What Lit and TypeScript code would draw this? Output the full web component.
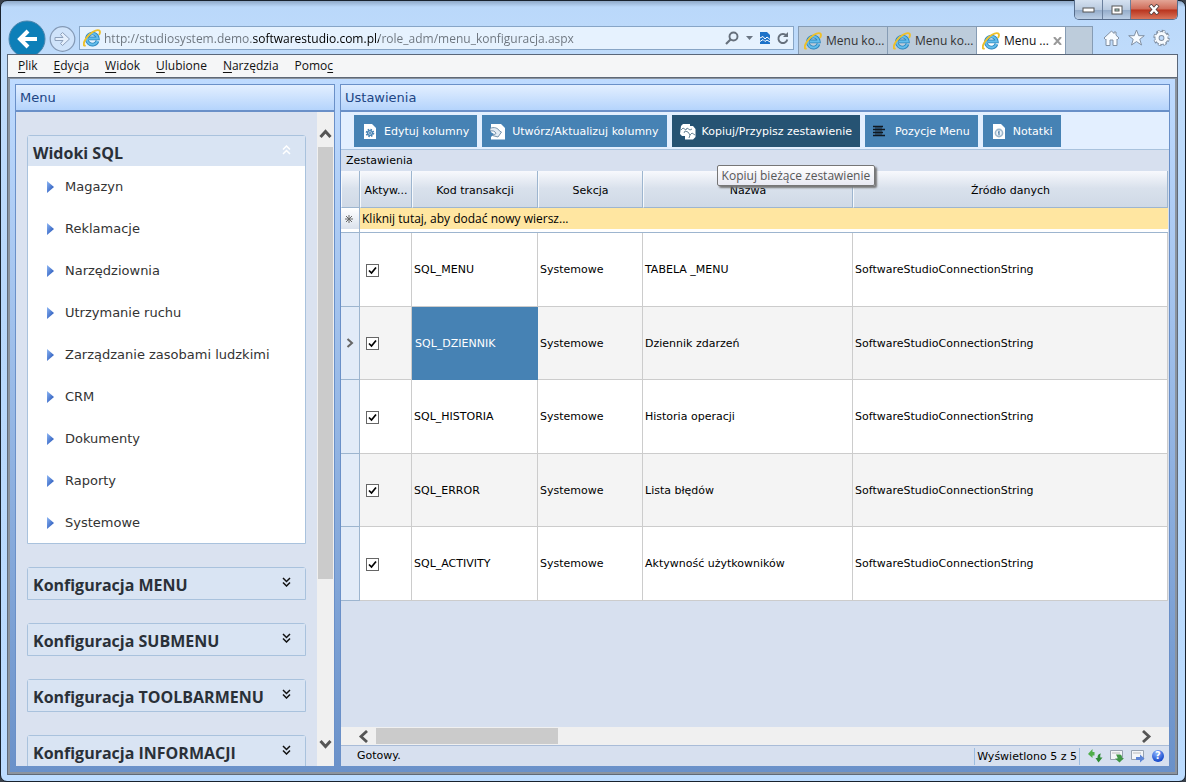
import { LitElement, html, css, svg } from "lit";
import { customElement } from "lit/decorators.js";
import { classMap } from "lit/directives/class-map.js";

const ieIcon = (id: string) => html`<svg class="ie" viewBox="0 0 18 18" aria-hidden="true">
  <defs>
    <linearGradient id="e${id}" x1="0" y1="0" x2="0" y2="1">
      <stop offset="0" stop-color="#7fd0f5" />
      <stop offset="1" stop-color="#1478c0" />
    </linearGradient>
  </defs>
  <path d="M14.500 12A5.500 5.500 0 1 1 14.800 9.400H6" fill="none" stroke="#2d86bd" stroke-width="3.600" />
  <path d="M14.500 12A5.500 5.500 0 1 1 14.800 9.400H6" fill="none" stroke="#62bdec" stroke-width="2" />
  <path d="M2.600 16.200C0 17.800 .2 13.800 3 9.500C7 3.500 13.500 .2 16 1.400C17.400 2.200 17 4.200 16 6" fill="none" stroke="#eec02a" stroke-width="1.900" />
</svg>`;

const chevrons = (up: boolean) => html`<svg class="chev" viewBox="0 0 9 10" aria-hidden="true">
  <path d=${up ? "M1 4.500L4.500 1L8 4.500M1 9L4.500 5.500L8 9" : "M1 1L4.500 4.500L8 1M1 5.500L4.500 9L8 5.500"} fill="none" stroke="currentColor" stroke-width="1.500" />
</svg>`;

const docShape = svg`<path d="M2 0H10L14 4V15H2Z" fill="#fff" />`;
const toolIcons: Record<string, unknown> = {
  edit: svg`${docShape}<circle cx="8" cy="9" r="3.400" fill="none" stroke="#4682b4" stroke-width="1.800" stroke-dasharray="1.500 1.170" /><circle cx="8" cy="9" r="2.400" fill="#d6e4f0" stroke="#4682b4" stroke-width="1.300" /><circle cx="8" cy="9" r="1" fill="#4682b4" />`,
  update: svg`<path d="M1 0H11L15 4V15.500H1Z" fill="#fff" /><path d="M0 4.500C4 2.500 8 4 9.500 7L11.500 8L8 13L2.500 11.500L6 9.500C5 7 3 6.500 0 7Z" fill="#e3ebf3" stroke="#7894ac" stroke-width="1" /><path d="M0 7.500L4 10L0 14Z" fill="#4682b4" />`,
  copy: svg`<path d="M1 2L3 0H10V2H13L15.500 5V13L13 15.500H5V12H2L0 10Z" fill="#fff" /><path d="M1 6L3 4L6 6L7 4L10 6L12 5M4 9L5 7L8 8L10 11L12 9L15 11M10 11L9 14" fill="none" stroke="#6d8798" stroke-width="1" />`,
  list: svg`<path d="M0 2.500H10M0 5.500H12M0 8.500H10M0 11.500H12" stroke="#101820" stroke-width="1.300" /><path d="M2 4H9M2 7H9M2 10H9" stroke="#101820" stroke-width=".8" />`,
  notes: svg`${docShape}<circle cx="8" cy="9" r="3.600" fill="#eef4fa" stroke="#9db6ca" stroke-width="1.600" /><path d="M8 6.800V11.200M7 8.500H8" stroke="#5d87ab" stroke-width="1.300" />`,
};

const tools = [
  { icon: "edit", label: "Edytuj kolumny" },
  { icon: "update", label: "Utwórz/Aktualizuj kolumny" },
  { icon: "copy", label: "Kopiuj/Przypisz zestawienie", tip: "Kopiuj bieżące zestawienie" },
  { icon: "list", label: "Pozycje Menu" },
  { icon: "notes", label: "Notatki" },
];

const rows = [
  ["SQL_MENU", "TABELA _MENU"],
  ["SQL_DZIENNIK", "Dziennik zdarzeń"],
  ["SQL_HISTORIA", "Historia operacji"],
  ["SQL_ERROR", "Lista błędów"],
  ["SQL_ACTIVITY", "Aktywność użytkowników"],
];

@customElement("browser-chrome")
export class BrowserChrome extends LitElement {
  static styles = css`
    :host { display: block; font: 12px/16px "Open Sans", "Noto Sans", sans-serif; color: #111; }
    button { border: 0; padding: 0; background: none; font: inherit; color: inherit; display: block; }
    svg { display: block; flex: none; }
    .title { height: 20px; display: flex; justify-content: flex-end; }
    .controls { display: flex; height: 20px; border: 1px solid #566d8c; border-top: 0; border-radius: 0 0 5px 5px; box-sizing: border-box; overflow: hidden; }
    .ctl { width: 28px; background: linear-gradient(#d5e2f1, #b9cadf 50%, #93abc9 52%, #bccfe6); border-right: 1px solid #6a7f9c; display: grid; place-items: center; }
    .ctl.wide { width: 46px; background: linear-gradient(#e3a596, #cf6b58 48%, #b8331d 52%, #d9755b); border: 0; }
    .nav { height: 34px; display: flex; overflow: hidden; padding-left: 1px; }
    .back { width: 38px; }
    .fwd { width: 28px; margin-left: 3px; }
    .addr { flex: 1; margin: 6px 4px 4px 2px; display: flex; align-items: center; height: 24px; box-sizing: border-box; border: 1px solid #87a5c6; background: #e6f2fe; padding: 0 4px 0 3px; }
    .ie { width: 18px; height: 18px; }
    .url { flex: 1; min-width: 0; border: 0; outline: 0; padding: 0; margin: 0 6px 0 3px; height: 22px; font: inherit; color: #6b737c; background: linear-gradient(90deg, #6b737c 148px, #000 148px 275px, #6b737c 275px); background-clip: text; -webkit-background-clip: text; -webkit-text-fill-color: transparent; }
    .addricons { display: flex; gap: 7px; align-items: center; }
    .tabs { display: flex; margin-top: 6px; border: 1px solid #869cb4; border-bottom: 0; background: #bdccdb; color: #333; }
    .tab { display: flex; align-items: center; width: 83px; border-right: 1px solid #869cb4; padding-left: 5px; gap: 4px; white-space: nowrap; }
    .tab.on { background: #fff; color: #111; }
    .new { width: 26px; }
    .cmds { display: flex; gap: 8px; padding: 9px 8px 0 10px; }
    .menu { display: flex; height: 22px; align-items: center; background: #f5f6f7; border: 1px solid #5a6779; padding-left: 10px; gap: 16px; }
    u { text-underline-offset: 2px; }
  `;
  render() {
    return html`
      <div class="title"><div class="controls">
        <button class="ctl" aria-label="Minimalizuj"><svg width="13" height="6"><rect x="1" y="1" width="11" height="4" fill="#fff" stroke="#555" /></svg></button>
        <button class="ctl" aria-label="Maksymalizuj"><svg width="12" height="10"><rect x="1" y="1" width="10" height="8" fill="#fff" stroke="#555" /><rect x="4" y="4" width="4" height="2" fill="#adc" stroke="#555" /></svg></button>
        <button class="ctl wide" aria-label="Zamknij"><svg width="12" height="11"><path d="M2 1L10 10M10 1L2 10" stroke="#53403f" stroke-width="4" /><path d="M2.500 1.500L9.500 9.500M9.500 1.500L2.500 9.500" stroke="#fff" stroke-width="2.400" /></svg></button>
      </div></div>
      <div class="nav">
        <button class="back" aria-label="Wstecz"><svg width="38" height="38" viewBox="0 0 38 38"><circle cx="19" cy="19" r="18" fill="#0d7fb8" stroke="#4d86ad" /><path d="M29 19H12M20 11L12 19L20 27" fill="none" stroke="#fff" stroke-width="4" /></svg></button>
        <button class="fwd" aria-label="Dalej"><svg width="27" height="38" viewBox="0 0 27 38"><circle cx="13.500" cy="19" r="12.300" fill="#cfe3fa" stroke="#8499b5" stroke-width="1.200" /><path d="M6 17.500H14L11.500 14.500L13.500 12.500L20.500 19L13.500 25.500L11.500 23.500L14 20.500H6Z" fill="#e4effc" stroke="#8da0bb" /></svg></button>
        <div class="addr">${ieIcon("a")}
          <input class="url" aria-label="Adres" .value=${"http://studiosystem.demo.softwarestudio.com.pl/role_adm/menu_konfiguracja.aspx"} />
          <div class="addricons">
            <svg width="14" height="14"><circle cx="8.500" cy="5.500" r="4" fill="none" stroke="#66707c" stroke-width="1.900" /><path d="M5.500 8.500L1 13" stroke="#66707c" stroke-width="2.200" /></svg>
            <svg width="7" height="4"><path d="M0 0H7L3.500 4Z" fill="#6b7683" /></svg>
            <svg width="10" height="12"><path d="M0 0H7L10 3V12H0Z" fill="#1c72c9" /><path d="M0 6L3 4.500L5 7L7 5L10 7.500M0 9.500L3 7.500L5 9.500L7 8L10 10" fill="none" stroke="#fff" stroke-width="1" /></svg>
            <svg width="12" height="13"><path d="M9.500 3.800A4.500 4.500 0 1 0 10.300 7.500" fill="none" stroke="#66707c" stroke-width="1.900" /><path d="M6 5H11V0Z" fill="#66707c" /></svg>
          </div>
        </div>
        <div class="tabs">
          <div class="tab">${ieIcon("b")}<span>Menu ko...</span></div>
          <div class="tab">${ieIcon("c")}<span>Menu ko...</span></div>
          <div class="tab on">${ieIcon("d")}<span>Menu ...</span><svg width="9" height="8"><path d="M1 0L8 8M8 0L1 8" stroke="#999" stroke-width="2" /></svg></div>
          <div class="new"></div>
        </div>
        <div class="cmds">
          <svg width="17" height="18"><path d="M1 9L8.500 2L11 4.500V3H13V6.200L16 9L14.500 10.500L14 10V16.500H10V11H7V16.500H3V10L2.500 10.500Z" fill="#f7fbff" stroke="#8190a3" /></svg>
          <svg width="17" height="18"><path d="M8.500 1L10.700 6.700H16.300L11.800 10.300L13.500 16L8.500 12.600L3.500 16L5.200 10.300L.7 6.700H6.300Z" fill="#f7fbff" stroke="#8190a3" /></svg>
          <svg width="17" height="18"><circle cx="8.500" cy="9" r="6.700" fill="none" stroke="#8190a3" stroke-width="3" stroke-dasharray="3.400 1.862" /><circle cx="8.500" cy="9" r="4.500" fill="none" stroke="#8190a3" stroke-width="5" /><circle cx="8.500" cy="9" r="4.500" fill="none" stroke="#f7fbff" stroke-width="3.200" /><circle cx="8.500" cy="9" r="6.500" fill="none" stroke="#f7fbff" stroke-width="1.800" stroke-dasharray="1.600 3.505" stroke-dashoffset="-.9" /></svg>
        </div>
      </div>
      <div class="menu"><span><u>P</u>lik</span><span><u>E</u>dycja</span><span><u>W</u>idok</span><span><u>U</u>lubione</span><span><u>N</u>arzędzia</span><span>Pomo<u>c</u></span></div>`;
  }
}

@customElement("side-menu")
export class SideMenu extends LitElement {
  static styles = css`
    :host { display: flex; min-height: 0; flex: 1; background: #dae2f0; font: 13px/16px Verdana, "DejaVu Sans", sans-serif; color: #333; }
    svg { display: block; flex: none; }
    .list { flex: 1; min-width: 0; overflow: hidden; padding: 23px 11px 0; display: flex; flex-direction: column; gap: 23px; }
    .group { flex: none; border: 1px solid #a9c2dd; border-radius: 3px 3px 0 0; background: #fff; }
    .head { display: flex; align-items: center; justify-content: space-between; width: 100%; height: 31px; border: 0; margin: 0; padding: 3px 14px 0 5px; background: #d9e4f3; font: bold 16px/20px "Open Sans", "Noto Sans", sans-serif; color: #2a3038; text-align: left; }
    .head .chev { width: 9px; height: 10px; margin-bottom: 6px; color: #111; }
    .head.open { height: 30px; padding-top: 4px; }
    .head.open .chev { color: #fff; }
    .items { margin: 0; padding: 0; list-style: none; }
    .items a { display: flex; align-items: center; gap: 11px; height: 42px; padding-left: 19px; color: inherit; text-decoration: none; }
    .items li:last-child a { height: 41px; }
    .bar { width: 17px; background: #f0f0f0; display: flex; flex-direction: column; align-items: center; padding: 16px 0; box-sizing: border-box; }
    .track { flex: 1; width: 15px; margin: 8px 0 0; }
    .thumb { height: 73%; background: #cbcbcb; }
  `;
  render() {
    const items = ["Magazyn", "Reklamacje", "Narzędziownia", "Utrzymanie ruchu", "Zarządzanie zasobami ludzkimi", "CRM", "Dokumenty", "Raporty", "Systemowe"];
    return html`
      <div class="list">
        <div class="group">
          <button class="head open">Widoki SQL${chevrons(true)}</button>
          <ul class="items">${items.map((t) => html`<li><a href="#"><svg width="7" height="12"><defs><linearGradient id="g" x1="0" y1="0" x2="1" y2="1"><stop stop-color="#8fb8f5" /><stop offset="1" stop-color="#1546b0" /></linearGradient></defs><path d="M0 0L7 6L0 12Z" fill="url(#g)" /></svg>${t}</a></li>`)}</ul>
        </div>
        ${["MENU", "SUBMENU", "TOOLBARMENU", "INFORMACJI"].map((t) => html`<div class="group"><button class="head">Konfiguracja ${t}${chevrons(false)}</button></div>`)}
      </div>
      <div class="bar">
        <svg width="13" height="11"><path d="M1.500 9L6.500 3.500L11.500 9" fill="none" stroke="#555" stroke-width="3" /></svg>
        <div class="track"><div class="thumb"></div></div>
        <svg width="13" height="11"><path d="M1.500 2L6.500 7.500L11.500 2" fill="none" stroke="#555" stroke-width="3" /></svg>
      </div>`;
  }
}

@customElement("settings-grid")
export class SettingsGrid extends LitElement {
  static styles = css`
    :host { display: flex; flex-direction: column; min-height: 0; flex: 1; background: #d7e0ef; font: 11px/14px Verdana, "DejaVu Sans", sans-serif; color: #000; }
    svg { display: block; flex: none; }
    .tools { display: flex; gap: 5px; padding: 3px 13px 2px; background: #e3efff; border-bottom: 1px solid #a9c2dd; }
    .tool { position: relative; display: flex; align-items: center; gap: 6px; height: 32px; border: 0; padding: 1px 8px 0; background: #4682b4; color: #fff; font: inherit; white-space: nowrap; }
    .tool.on { background: #265373; }
    .tip { position: absolute; left: 45px; top: 50px; z-index: 2; border: 1px solid #767676; border-radius: 2px; padding: 1px 4px; background: linear-gradient(#fff, #e8e9f2); box-shadow: 2px 2px 2px #777; color: #575757; font: 12px/17px "Open Sans", "Noto Sans", sans-serif; }
    .caption { padding: 4px 5px 3px; }
    table { border-collapse: separate; border-spacing: 0; table-layout: fixed; width: 100%; padding-right: 1px; }
    .c0 { width: 19px; } .c1 { width: 52px; } .c2 { width: 126px; } .c3 { width: 105px; } .c4 { width: 210px; }
    th { height: 37px; padding: 3px 2px 0; font-weight: normal; white-space: nowrap; overflow: hidden; background: linear-gradient(#f8f9fd, #d9e1ec 48%, #cfd9e6); border-right: 1px solid #9db5cf; border-bottom: 1px solid #9db5cf; border-left: 1px solid #f6f9fc; box-sizing: border-box; }
    td { padding: 1px 2px 0; white-space: nowrap; border-right: 1px solid #ccc; border-bottom: 1px solid #ccc; box-sizing: border-box; background: #fff; }
    .ind { background: #e2ebf8; border-color: #9db5cf; padding: 0 0 0 5px; }
    .add td { height: 25px; background: #ffe6a1; font: 12px/16px "Open Sans", "Noto Sans", sans-serif; border: 0; border-bottom: 1px solid #9db5cf; box-shadow: inset 0 -3px #fff; padding-bottom: 3px; }
    .add .ind { background: linear-gradient(#fff, #d5dde9); border-right: 1px solid #9db5cf; padding-left: 4px; }
    .row td { height: 73px; }
    .row:nth-child(odd) td { height: 74px; }
    .alt td { background: #f4f4f4; }
    .alt .ind, .row .ind { background: #e2ebf8; }
    .row .sel { background: #4682b4; color: #fff; border-color: #4682b4; padding-left: 3px; }
    input { appearance: none; display: block; width: 13px; height: 13px; margin: 0 4px; border: 1px solid #666; background: #fff url('data:image/svg+xml,<svg xmlns="http://www.w3.org/2000/svg" width="11" height="11"><path d="M2 5.500L4.500 8L9 2.500" fill="none" stroke="black" stroke-width="1.700"/></svg>') center no-repeat; }
    .hbar { margin-top: auto; height: 18px; box-sizing: border-box; display: flex; align-items: center; background: #f0f0f0; padding: 0 17px; }
    .track { flex: 1; height: 16px; margin: 0 7px 0 8px; }
    .thumb { width: 24%; height: 16px; background: #cbcbcb; }
    .status { display: flex; align-items: center; height: 20px; border-top: 1px solid #a9bcd8; padding: 0 5px 0 16px; gap: 8px; }
    .count { margin-left: auto; border: solid #9dbde0; border-width: 0 1px; padding: 2px 2px 1px; }
    .icons { display: flex; gap: 7px; align-items: center; }
    .ball { width: 12px; height: 12px; border-radius: 50%; background: radial-gradient(circle at 40% 25%, #8db4ff, #1648ca 75%); color: #fff; font: bold 10px/12px "DejaVu Sans", sans-serif; text-align: center; }
  `;
  render() {
    return html`
      <div class="tools">${tools.map((t) => html`<button class=${classMap({ tool: true, on: !!t.tip })}><svg width="16" height="16" viewBox="0 0 16 16">${toolIcons[t.icon]}</svg>${t.label}${t.tip ? html`<span class="tip" role="tooltip">${t.tip}</span>` : ""}</button>`)}</div>
      <div class="caption">Zestawienia</div>
      <table>
        <colgroup><col class="c0" /><col class="c1" /><col class="c2" /><col class="c3" /><col class="c4" /><col /></colgroup>
        <thead>
          <tr><th></th><th>Aktyw...</th><th>Kod transakcji</th><th>Sekcja</th><th>Nazwa</th><th>Źródło danych</th></tr>
          <tr class="add"><td class="ind"><svg width="8" height="8"><path d="M4 0V8M0 4H8M1 1L7 7M7 1L1 7" stroke="#666" /></svg></td><td colspan="5">Kliknij tutaj, aby dodać nowy wiersz...</td></tr>
        </thead>
        <tbody>${rows.map(([code, name], i) => html`<tr class=${classMap({ row: true, alt: i % 2 === 1 })}>
          <td class="ind">${i === 1 ? html`<svg width="8" height="10"><path d="M1.500 1L6 5L1.500 9" fill="none" stroke="#666" stroke-width="2" /></svg>` : ""}</td>
          <td><input type="checkbox" aria-label=${"Aktywne: " + code} checked /></td>
          <td class=${classMap({ sel: i === 1 })}>${code}</td><td>Systemowe</td><td>${name}</td><td>SoftwareStudioConnectionString</td></tr>`)}</tbody>
      </table>
      <div class="hbar">
        <svg width="10" height="13"><path d="M9 1L3 6.500L9 12" fill="none" stroke="#555" stroke-width="2.800" /></svg>
        <div class="track"><div class="thumb"></div></div>
        <svg width="10" height="13"><path d="M1 1L7 6.500L1 12" fill="none" stroke="#555" stroke-width="2.800" /></svg>
      </div>
      <div class="status"><span>Gotowy.</span><span class="count">Wyświetlono 5 z 5</span>
        <div class="icons">
          <svg width="15" height="14"><path d="M0 5L4.500 0V3H6.500V6.500H4.500V9Z" fill="#4fae4a" /><path d="M14.500 8.500L10.500 13.500L7.500 9H9.500C9.500 6.500 10 5 13 4.500C12 6 12.300 7 12.300 8.500Z" fill="#2f8c36" /></svg>
          <svg width="14" height="14"><path d="M.5 1.500H12.500V10.500H.5Z" fill="#f3f5f8" stroke="#96a1b0" /><path d="M2 4H10" stroke="#bbb" /><path d="M6 5.500H10C12 6 12 7.500 12 9H14L9.500 13.500L5 9.500H7.500V8.500Z" fill="#409646" /></svg>
          <svg width="14" height="14"><path d="M.5 1.500H12.500V10.500H.5Z" fill="#f3f5f8" stroke="#96a1b0" /><path d="M2 4H10" stroke="#bbb" /><path d="M5 8H9V5.500L13.500 9.500L9 13.500V11H5Z" fill="#5c84d6" /></svg>
          <div class="ball">?</div>
        </div>
      </div>`;
  }
}

@customElement("app-root")
export class AppRoot extends LitElement {
  static styles = css`
    :host { display: block; height: 100vh; background: #39404a; }
    .window { height: 100%; box-sizing: border-box; display: flex; flex-direction: column; border: 1px solid #18222e; border-radius: 7px; padding: 0 7px 6px 6px; background: linear-gradient(#8fa9c8, #bad8fa 6px, #c0dcfb 60px, #b7d7fa 300px, #bcdcff); }
    browser-chrome { flex: none; margin-top: -1px; }
    .page { flex: 1; min-height: 0; display: grid; grid-template-columns: 320px minmax(0, 1fr); gap: 5px; margin-top: -1px; border: solid #8b949f; border-width: 2px 3px 3px; padding: 5px 5px 6px; background: linear-gradient(#bfdbff, #6a91c9); outline: 1px solid #5f6977; outline-offset: -1px; }
    .panel { min-height: 0; min-width: 0; display: flex; flex-direction: column; border: 1px solid #6a90c8; border-bottom: 0; overflow: hidden; }
    h2 { flex: none; margin: 0; height: 25px; padding-left: 4px; background: linear-gradient(#e3efff, #b5d4fc); border-bottom: 2px solid #6a90c8; font: 13px/25px Verdana, "DejaVu Sans", sans-serif; color: #204584; }
  `;
  render() {
    return html`<div class="window">
      <browser-chrome></browser-chrome>
      <main class="page">
        <section class="panel"><h2>Menu</h2><side-menu></side-menu></section>
        <section class="panel"><h2>Ustawienia</h2><settings-grid></settings-grid></section>
      </main>
    </div>`;
  }
}
